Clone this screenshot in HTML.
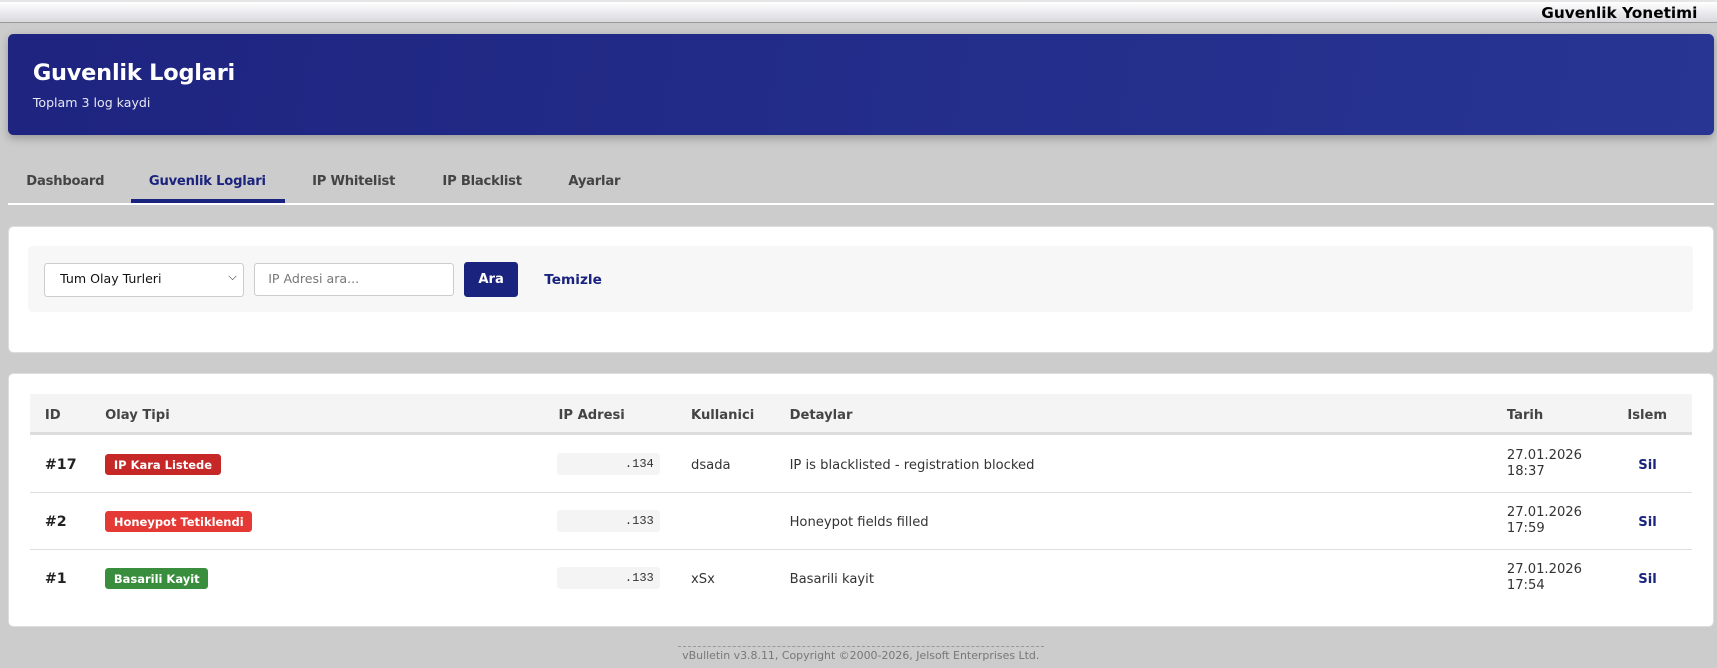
<!DOCTYPE html>
<html><head><meta charset="utf-8"><style>
*{box-sizing:border-box;margin:0;padding:0}
html,body{width:1717px;height:668px;overflow:hidden;background:#cccccc}
#w{zoom:1.0951;position:relative;width:1568px;height:610px;font-family:"DejaVu Sans","Liberation Sans",sans-serif;color:#333}
.abs{position:absolute}
.top{left:0;top:0;width:1568px;height:21px;background:linear-gradient(#ffffff,#f4f4f6 30%,#d8d8de);border-top:2px solid #e6e6e6;border-bottom:1px solid #9a9a9a}
.top span{position:absolute;right:18px;top:2px;font-weight:bold;font-size:14px;color:#000}
.hdr{left:7px;top:31px;width:1558px;height:92px;background:linear-gradient(100deg,#1e2480,#283593);border-radius:5px;box-shadow:0 3px 8px rgba(0,0,0,.25);color:#fff;padding:24px 23px}
.hdr h1{font-size:20.5px;font-weight:bold;letter-spacing:-.2px}
.hdr p{font-size:11.5px;margin-top:8px;color:#e8e8f4}
.tab{top:159px;font-size:12px;font-weight:bold;color:#444;letter-spacing:-.2px}
.card{background:#fff;border:1px solid #ddd;border-radius:5px;left:7px;width:1558px}
.fb{left:26px;top:225px;width:1520px;height:60px;background:#f7f7f7;border-radius:4px}
.sel{left:40px;top:240px;width:183px;height:31px;border:1px solid #ccc;border-radius:3px;background:#fff;font-size:11.5px;padding:7px 14px;color:#111}
.inp{left:232px;top:240px;width:183px;height:30px;border:1px solid #ccc;border-radius:3px;background:#fff;font-size:11.5px;padding:7px 12px;color:#777}
.btn{left:424px;top:239px;width:49px;height:32px;background:#1a237e;border-radius:3px;color:#fff;font-weight:bold;font-size:12px;text-align:center;line-height:32px}
.th{left:27px;top:360px;width:1518px;height:37px;background:#f4f4f4;border-bottom:3px solid #ddd}
.t{font-size:12px;position:absolute}
.hd{top:373px;font-weight:bold;color:#444}
.line{left:27px;width:1518px;height:1px;background:#ddd}
.badge{color:#fff;font-weight:bold;font-size:10.5px;padding:3px 8px;border-radius:3px;position:absolute}
.ip{left:509px;width:94px;height:20px;background:#f4f4f4;border-radius:3px;font-family:"Liberation Mono",monospace;font-size:11px;text-align:right;padding:3px 6px;color:#333}
.id{left:41px;font-weight:bold;font-size:13px;color:#222}
.sil{left:1496px;font-weight:bold;color:#1a237e}
</style></head><body><div id="w">
<div class="abs top"><span>Guvenlik Yonetimi</span></div>
<div class="abs hdr"><h1>Guvenlik Loglari</h1><p>Toplam 3 log kaydi</p></div>
<div class="abs tab" style="left:24px">Dashboard</div>
<div class="abs tab" style="left:136px;color:#1a237e">Guvenlik Loglari</div>
<div class="abs tab" style="left:285px">IP Whitelist</div>
<div class="abs tab" style="left:404px">IP Blacklist</div>
<div class="abs tab" style="left:519px">Ayarlar</div>
<div class="abs" style="left:7px;top:185px;width:1558px;height:2px;background:#fff"></div>
<div class="abs" style="left:120px;top:182px;width:140px;height:3px;background:#1a237e"></div>

<div class="abs card" style="top:206px;height:116px"></div>
<div class="abs fb"></div>
<div class="abs sel">Tum Olay Turleri<span style="position:absolute;right:6px;top:6px;font-size:10px">&#9013;</span></div>
<div class="abs inp">IP Adresi ara...</div>
<div class="abs btn">Ara</div>
<div class="abs" style="left:497px;top:248px;font-size:12.5px;font-weight:bold;color:#1a237e">Temizle</div>

<div class="abs card" style="top:341px;height:232px"></div>
<div class="abs th"></div>
<div class="t hd" style="left:41px">ID</div>
<div class="t hd" style="left:96px">Olay Tipi</div>
<div class="t hd" style="left:510px">IP Adresi</div>
<div class="t hd" style="left:631px">Kullanici</div>
<div class="t hd" style="left:721px">Detaylar</div>
<div class="t hd" style="left:1376px">Tarih</div>
<div class="t hd" style="left:1486px">Islem</div>

<div class="t id" style="top:417px">#17</div>
<div class="badge" style="left:96px;top:415px;background:#c62828">IP Kara Listede</div>
<div class="abs ip" style="top:414px">.134</div>
<div class="t" style="left:631px;top:418px">dsada</div>
<div class="t" style="left:721px;top:418px">IP is blacklisted - registration blocked</div>
<div class="t" style="left:1376px;top:409px;line-height:15px">27.01.2026<br>18:37</div>
<div class="t sil" style="top:418px">Sil</div>
<div class="abs line" style="top:449px"></div>

<div class="t id" style="top:469px">#2</div>
<div class="badge" style="left:96px;top:467px;background:#e53935">Honeypot Tetiklendi</div>
<div class="abs ip" style="top:466px">.133</div>
<div class="t" style="left:721px;top:470px">Honeypot fields filled</div>
<div class="t" style="left:1376px;top:461px;line-height:15px">27.01.2026<br>17:59</div>
<div class="t sil" style="top:470px">Sil</div>
<div class="abs line" style="top:501px"></div>

<div class="t id" style="top:521px">#1</div>
<div class="badge" style="left:96px;top:519px;background:#388e3c">Basarili Kayit</div>
<div class="abs ip" style="top:518px">.133</div>
<div class="t" style="left:631px;top:522px">xSx</div>
<div class="t" style="left:721px;top:522px">Basarili kayit</div>
<div class="t" style="left:1376px;top:513px;line-height:15px">27.01.2026<br>17:54</div>
<div class="t sil" style="top:522px">Sil</div>

<div class="abs" style="left:619px;top:590px;width:334px;border-top:1px dashed #999;font-size:10px;color:#777;text-align:center;padding-top:2px;white-space:nowrap">vBulletin v3.8.11, Copyright ©2000-2026, Jelsoft Enterprises Ltd.</div>
</div></body></html>
